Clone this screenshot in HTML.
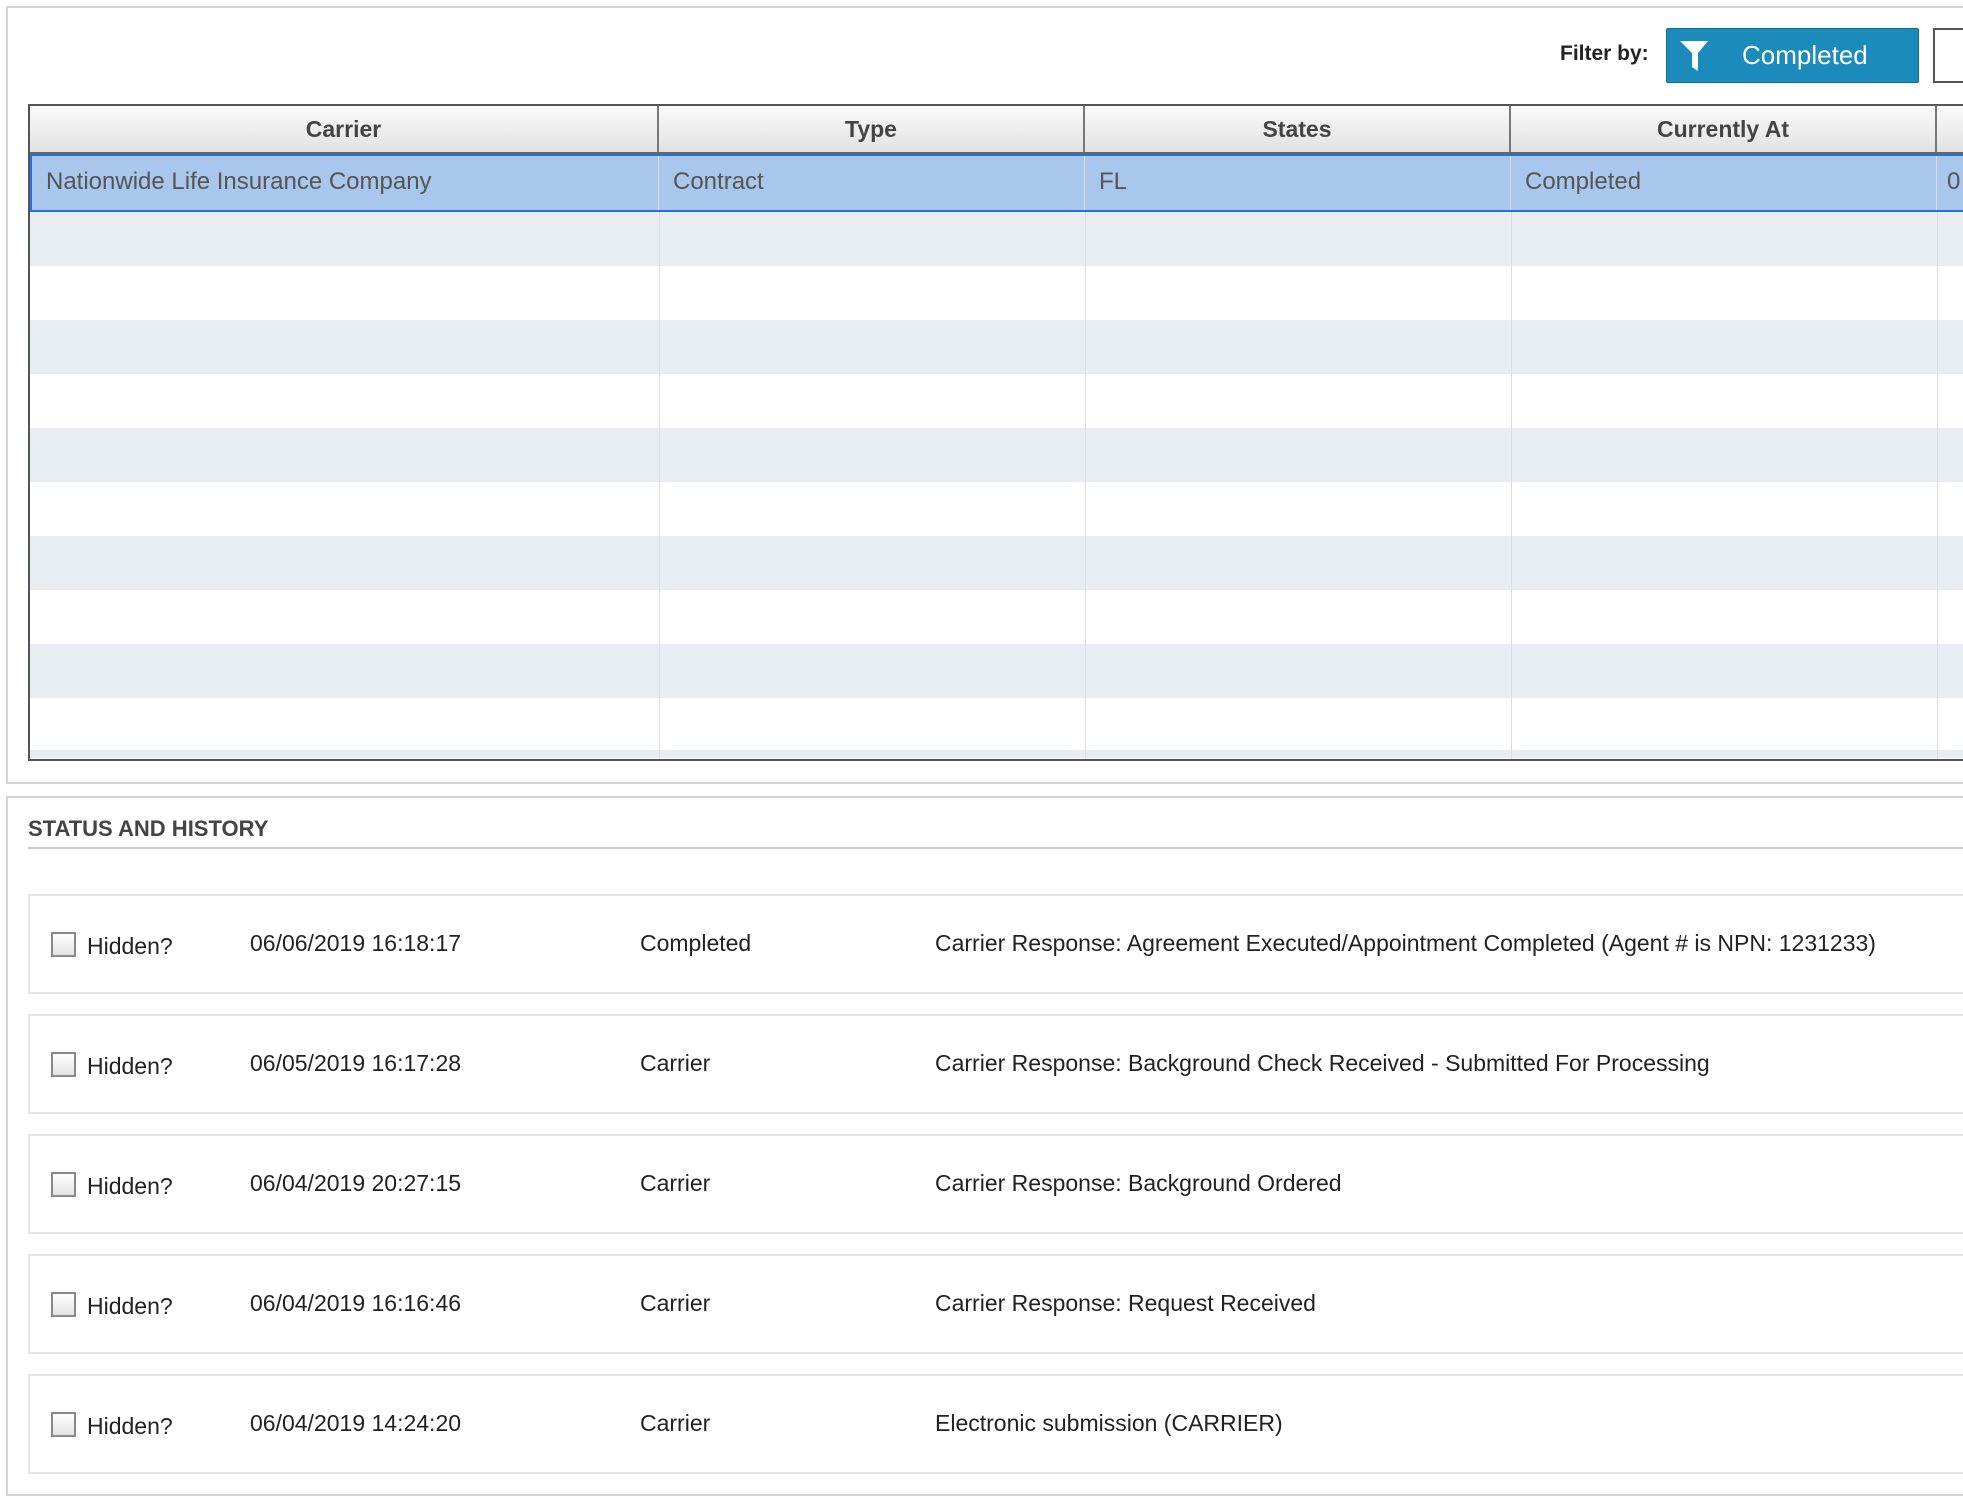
<!DOCTYPE html>
<html><head><meta charset="utf-8"><style>
*{margin:0;padding:0;box-sizing:border-box}
body{width:1963px;height:1480px;overflow:hidden;background:#fff;font-family:"Liberation Sans",sans-serif;color:#333;position:relative}
.a{position:absolute}
.p1{left:6px;top:6px;width:1970px;height:778px;border:2px solid #d4d4d4;border-right:none}
.p2{left:6px;top:796px;width:1970px;height:700px;border:2px solid #d4d4d4;border-right:none}
.tbl{left:28px;top:104px;width:1950px;height:657px;border:2px solid #555;border-right:none;overflow:hidden;background:#fff}
.hdr{left:0;top:0;width:100%;height:48px;background:linear-gradient(#fafafa,#e2e2e2);border-bottom:2px solid #666}
.hc{top:0;height:46px;line-height:46px;text-align:center;font-weight:bold;font-size:23px;color:#444;border-right:2px solid #777}
.row{left:0;width:100%;height:54px}
.cell{top:0;height:100%;border-right:1px solid #ddd;font-size:24px;line-height:54px;padding-left:14px;color:#555}
.card{left:28px;width:1960px;height:100px;border:2px solid #e6e6e6;border-right:none}
.cb{left:21px;top:36px;width:25px;height:25px;border:2px solid #888;background:linear-gradient(#fff,#e4e4e4)}
.ct{font-size:23px;color:#222;top:34px}
</style></head><body>
<div class="a p1"></div>
<div class="a" style="left:1560px;top:42px;font-size:21px;font-weight:bold;color:#222">Filter by:</div>
<div class="a" style="left:1666px;top:28px;width:253px;height:55px;background:#1a8bba;border:1px solid #0f6e96;border-radius:2px"></div>
<svg class="a" style="left:1679px;top:40px" width="30" height="32" viewBox="0 0 30 32"><path d="M1 1H29L19 13V31L13 27V13Z" fill="#fff"/></svg>
<div class="a" style="left:1742px;top:40px;font-size:26px;color:#fff">Completed</div>
<div class="a" style="left:1933px;top:28px;width:40px;height:55px;border:2px solid #555;border-right:none"></div>

<div class="a tbl">
 <div class="a hdr">
  <div class="a hc" style="left:0;width:629px">Carrier</div>
  <div class="a hc" style="left:629px;width:426px">Type</div>
  <div class="a hc" style="left:1055px;width:426px">States</div>
  <div class="a hc" style="left:1481px;width:426px">Currently At</div>
 </div>
 <div class="a row" style="top:48px;height:58px;background:#a9c6ec;border:2px solid #2a6fe0">
  <div class="a cell" style="left:0;width:627px;line-height:52px">Nationwide Life Insurance Company</div>
  <div class="a cell" style="left:627px;width:426px;line-height:52px">Contract</div>
  <div class="a cell" style="left:1053px;width:426px;line-height:52px">FL</div>
  <div class="a cell" style="left:1479px;width:426px;line-height:52px">Completed</div>
  <div class="a cell" style="left:1905px;width:100px;line-height:52px;padding-left:10px">0</div>
 </div>
 <div class="a row" style="top:106px;background:#e8edf1"></div>
 <div class="a row" style="top:160px;background:#fff"></div>
 <div class="a row" style="top:214px;background:#e8edf1"></div>
 <div class="a row" style="top:268px;background:#fff"></div>
 <div class="a row" style="top:322px;background:#e8edf1"></div>
 <div class="a row" style="top:376px;background:#fff"></div>
 <div class="a row" style="top:430px;background:#e8edf1"></div>
 <div class="a row" style="top:484px;background:#fff"></div>
 <div class="a row" style="top:538px;background:#e8edf1"></div>
 <div class="a row" style="top:592px;height:60px;background:#fff;border-bottom:8px solid #e8edf1"></div>
 <div class="a" style="left:629px;top:106px;width:1px;height:560px;background:#ddd"></div>
 <div class="a" style="left:1055px;top:106px;width:1px;height:560px;background:#ddd"></div>
 <div class="a" style="left:1481px;top:106px;width:1px;height:560px;background:#ddd"></div>
 <div class="a" style="left:1907px;top:106px;width:1px;height:560px;background:#ddd"></div>
</div>

<div class="a p2"></div>
<div class="a" style="left:28px;top:816px;font-size:22px;font-weight:bold;color:#444">STATUS AND HISTORY</div>
<div class="a" style="left:28px;top:847px;width:1940px;height:2px;background:#ccc"></div>

<div class="a card" style="top:894px"><div class="a cb"></div><div class="a ct" style="left:57px;top:37px">Hidden?</div><div class="a ct" style="left:220px">06/06/2019 16:18:17</div><div class="a ct" style="left:610px">Completed</div><div class="a ct" style="left:905px">Carrier Response: Agreement Executed/Appointment Completed (Agent # is NPN: 1231233)</div></div>
<div class="a card" style="top:1014px"><div class="a cb"></div><div class="a ct" style="left:57px;top:37px">Hidden?</div><div class="a ct" style="left:220px">06/05/2019 16:17:28</div><div class="a ct" style="left:610px">Carrier</div><div class="a ct" style="left:905px">Carrier Response: Background Check Received - Submitted For Processing</div></div>
<div class="a card" style="top:1134px"><div class="a cb"></div><div class="a ct" style="left:57px;top:37px">Hidden?</div><div class="a ct" style="left:220px">06/04/2019 20:27:15</div><div class="a ct" style="left:610px">Carrier</div><div class="a ct" style="left:905px">Carrier Response: Background Ordered</div></div>
<div class="a card" style="top:1254px"><div class="a cb"></div><div class="a ct" style="left:57px;top:37px">Hidden?</div><div class="a ct" style="left:220px">06/04/2019 16:16:46</div><div class="a ct" style="left:610px">Carrier</div><div class="a ct" style="left:905px">Carrier Response: Request Received</div></div>
<div class="a card" style="top:1374px"><div class="a cb"></div><div class="a ct" style="left:57px;top:37px">Hidden?</div><div class="a ct" style="left:220px">06/04/2019 14:24:20</div><div class="a ct" style="left:610px">Carrier</div><div class="a ct" style="left:905px">Electronic submission (CARRIER)</div></div>
</body></html>
